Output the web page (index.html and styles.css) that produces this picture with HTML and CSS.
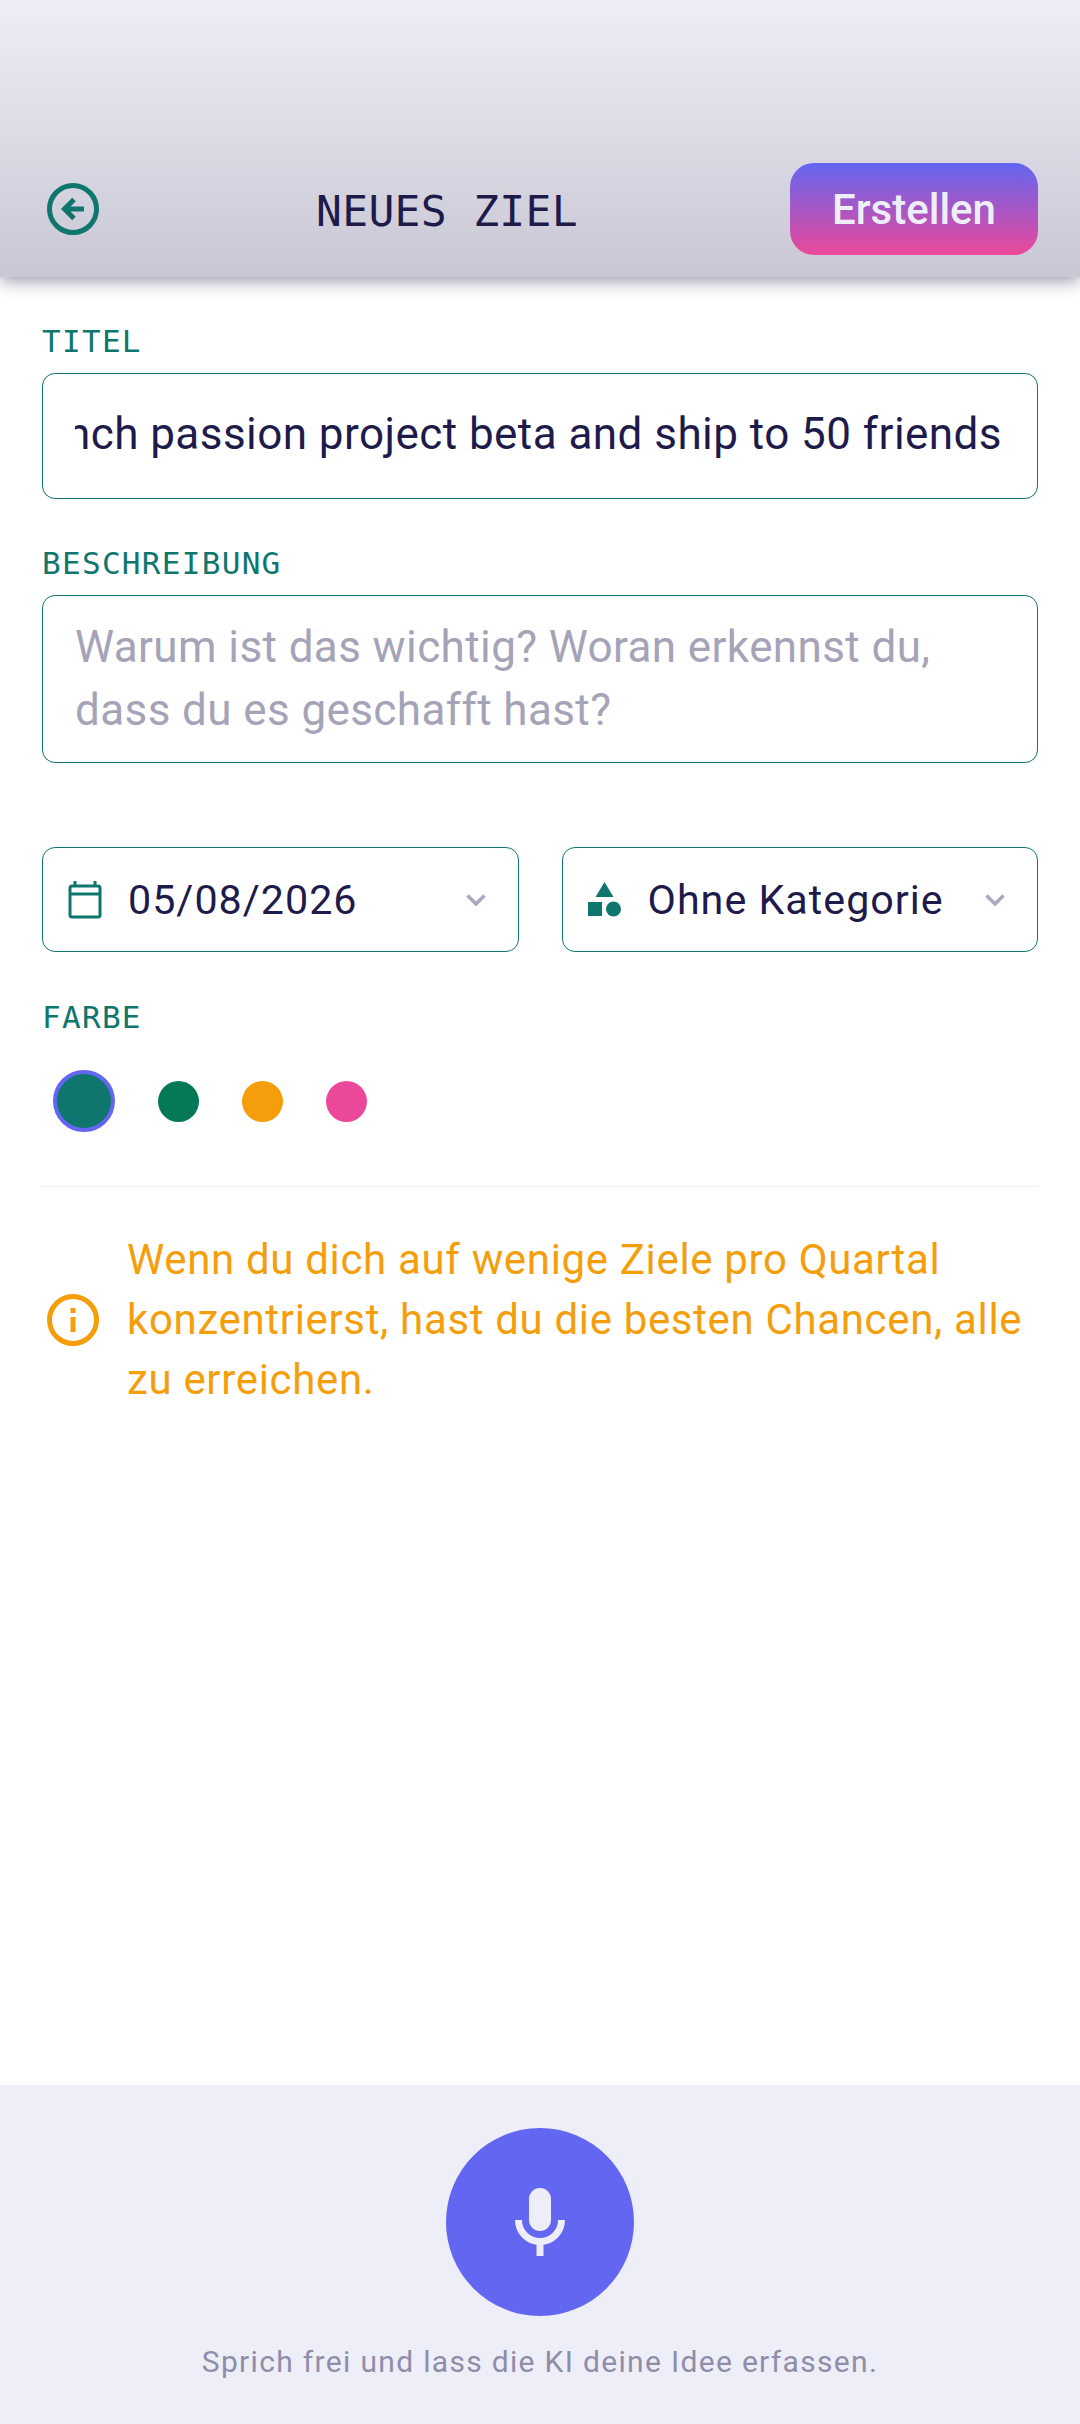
FILE: index.html
```html
<!DOCTYPE html>
<html lang="de">
<head>
<meta charset="utf-8">
<title>Neues Ziel</title>
<link rel="stylesheet" href="styles.css">
</head>
<body>
<div class="app">
  <header class="topbar">
    <svg class="back" viewBox="0 0 52 52"><circle cx="26" cy="26" r="23.5" fill="none" stroke="#0f766e" stroke-width="5"/><path d="M17 26H37M27 16.500L17.500 26L27 35.500" fill="none" stroke="#0f766e" stroke-width="5"/></svg>
    <h1 class="title">NEUES ZIEL</h1>
    <button class="create">Erstellen</button>
  </header>
  <main class="form">
    <div class="label first">TITEL</div>
    <div class="field single"><div class="clip"><span>Launch passion project beta and ship to 50 friends</span></div></div>
    <div class="label second">BESCHREIBUNG</div>
    <div class="field multi">Warum ist das wichtig? Woran erkennst du, dass du es geschafft hast?</div>
    <div class="selects">
      <div class="select">
        <svg class="sicon" viewBox="0 0 34 38"><rect x="2" y="5" width="30" height="31" rx="2" fill="none" stroke="#0f766e" stroke-width="3"/><path d="M2 13H32" stroke="#0f766e" stroke-width="3"/><path d="M7 0V5M27 0V5" stroke="#0f766e" stroke-width="3"/></svg>
        <span class="sval">05/08/2026</span>
        <svg class="chev" viewBox="0 0 20 12"><path d="M1.500 1.500L10 10L18.500 1.500" fill="none" stroke="#aba8bf" stroke-width="3.500"/></svg>
      </div>
      <div class="select">
        <svg class="sicon" viewBox="0 0 34 36"><path d="M16.500 0L25.500 15H7.500Z" fill="#0f766e"/><rect x="0" y="20" width="14" height="14" fill="#0f766e"/><circle cx="25.500" cy="27" r="7.500" fill="#0f766e"/></svg>
        <span class="sval">Ohne Kategorie</span>
        <svg class="chev" viewBox="0 0 20 12"><path d="M1.500 1.500L10 10L18.500 1.500" fill="none" stroke="#aba8bf" stroke-width="3.500"/></svg>
      </div>
    </div>
    <div class="label third">FARBE</div>
    <div class="swatches">
      <span class="swatch selected"></span>
      <span class="swatch green"></span>
      <span class="swatch amber"></span>
      <span class="swatch pink"></span>
    </div>
    <div class="rule"></div>
    <div class="hint">
      <svg class="info" viewBox="0 0 52 52"><circle cx="26" cy="26" r="23.500" fill="none" stroke="#f59e0b" stroke-width="5"/><rect x="23.500" y="23" width="5" height="15" fill="#f59e0b"/><rect x="23.500" y="14" width="5" height="5" fill="#f59e0b"/></svg>
      <p>Wenn du dich auf wenige Ziele pro Quartal konzentrierst, hast du die besten Chancen, alle zu erreichen.</p>
    </div>
  </main>
  <footer class="voice">
    <div class="mic">
      <svg viewBox="0 0 50 68" width="50" height="68"><rect x="14" y="0" width="22" height="43" rx="11" fill="#eeeef9"/><path d="M3.500 32A21.500 21.500 0 0 0 46.500 32" fill="none" stroke="#eeeef9" stroke-width="7"/><rect x="21.500" y="53" width="7" height="15" fill="#eeeef9"/></svg>
    </div>
    <p class="caption">Sprich frei und lass die KI deine Idee erfassen.</p>
  </footer>
</div>
</body>
</html>
```
FILE: styles.css
```css
* { box-sizing: border-box; }
html, body { margin: 0; padding: 0; background: #fff; }
body { font-family: Roboto, "Liberation Sans", sans-serif; color: #1e1b4b; }
.app { width: 1080px; height: 2424px; display: flex; flex-direction: column; }
.topbar {
  height: 277px; flex: none; display: flex; align-items: flex-end;
  padding: 0 42px 21px 47px; position: relative;
  background: linear-gradient(180deg, #eeeef9 0%, #c8c7d3 100%);
  box-shadow: 0 4px 16px rgba(30, 27, 75, .45);
}
.back { width: 52px; height: 52px; margin-bottom: 21px; flex: none; }
.title {
  font: 400 43px/50px "DejaVu Sans Mono", monospace; color: #1e1b4b; letter-spacing: .3px;
  position: absolute; left: 316px; bottom: 41px; margin: 0;
}
.create {
  margin-left: auto; width: 248px; height: 92px; margin-bottom: 1px; border: 0; border-radius: 24px;
  background: linear-gradient(180deg, #6366f1, #ec4899);
  color: #eeeef9; font: 500 42px Roboto, sans-serif;
}
.form { flex: 1; padding: 0 42px; }
.label { font: 400 31px/34px "DejaVu Sans Mono", monospace; color: #0f766e; letter-spacing: 1.300px; }
.label.first { margin-top: 47px; }
.label.second { margin-top: 47px; }
.label.third { margin-top: 48px; }
.field { border: 1px solid #0f766e; border-radius: 13px; margin-top: 15px; }
.single { height: 126px; padding: 0 35px 4px 32px; display: flex; align-items: center; }
.clip { width: 100%; overflow: hidden; display: flex; justify-content: flex-end; white-space: nowrap; font-size: 44px; letter-spacing: .45px; }
.clip span { flex: none; }
.multi { height: 168px; padding: 20px 32px; font-size: 44px; line-height: 63px; letter-spacing: .4px; color: #a5a3b8; margin-top: 15px; }
.selects { display: flex; gap: 43px; margin-top: 84px; }
.select {
  flex: 1; height: 105px; border: 1px solid #0f766e; border-radius: 13px;
  display: flex; align-items: center; padding: 0 32px 0 25px;
}
.sicon { width: 34px; height: 38px; flex: none; }
.sval { font-size: 41.250px; margin-left: 26px; letter-spacing: 1px; }
.chev { width: 20px; height: 12px; margin-left: auto; flex: none; }
.swatches { display: flex; align-items: center; height: 64px; margin-top: 35px; padding-left: 11px; }
.swatch { width: 41px; height: 41px; border-radius: 50%; display: block; margin-left: 43px; }
.swatch.selected { width: 62px; height: 62px; margin-left: 0; background: #0f766e; border: 4px solid #6366f1; }
.swatch.amber { background: #f59e0b; }
.swatch.green { background: #047857; }
.swatch.pink { background: #ec4899; }
.rule { height: 1px; background: #eeeef9; margin-top: 53px; }
.hint { display: flex; align-items: center; margin-top: 43px; padding-left: 5px; }
.info { width: 52px; height: 52px; flex: none; }
.hint p { margin: 0 0 0 28px; font-size: 42px; line-height: 60px; letter-spacing: .66px; color: #f59e0b; }
.voice { height: 339px; flex: none; background: #eeeef9; display: flex; flex-direction: column; align-items: center; padding-top: 43px; }
.mic { width: 188px; height: 188px; border-radius: 50%; background: #6366f1; display: flex; align-items: center; justify-content: center; }
.caption { margin: 28px 0 0; font-size: 30px; line-height: 36px; color: #8f8da8; letter-spacing: 1.320px; }
```
